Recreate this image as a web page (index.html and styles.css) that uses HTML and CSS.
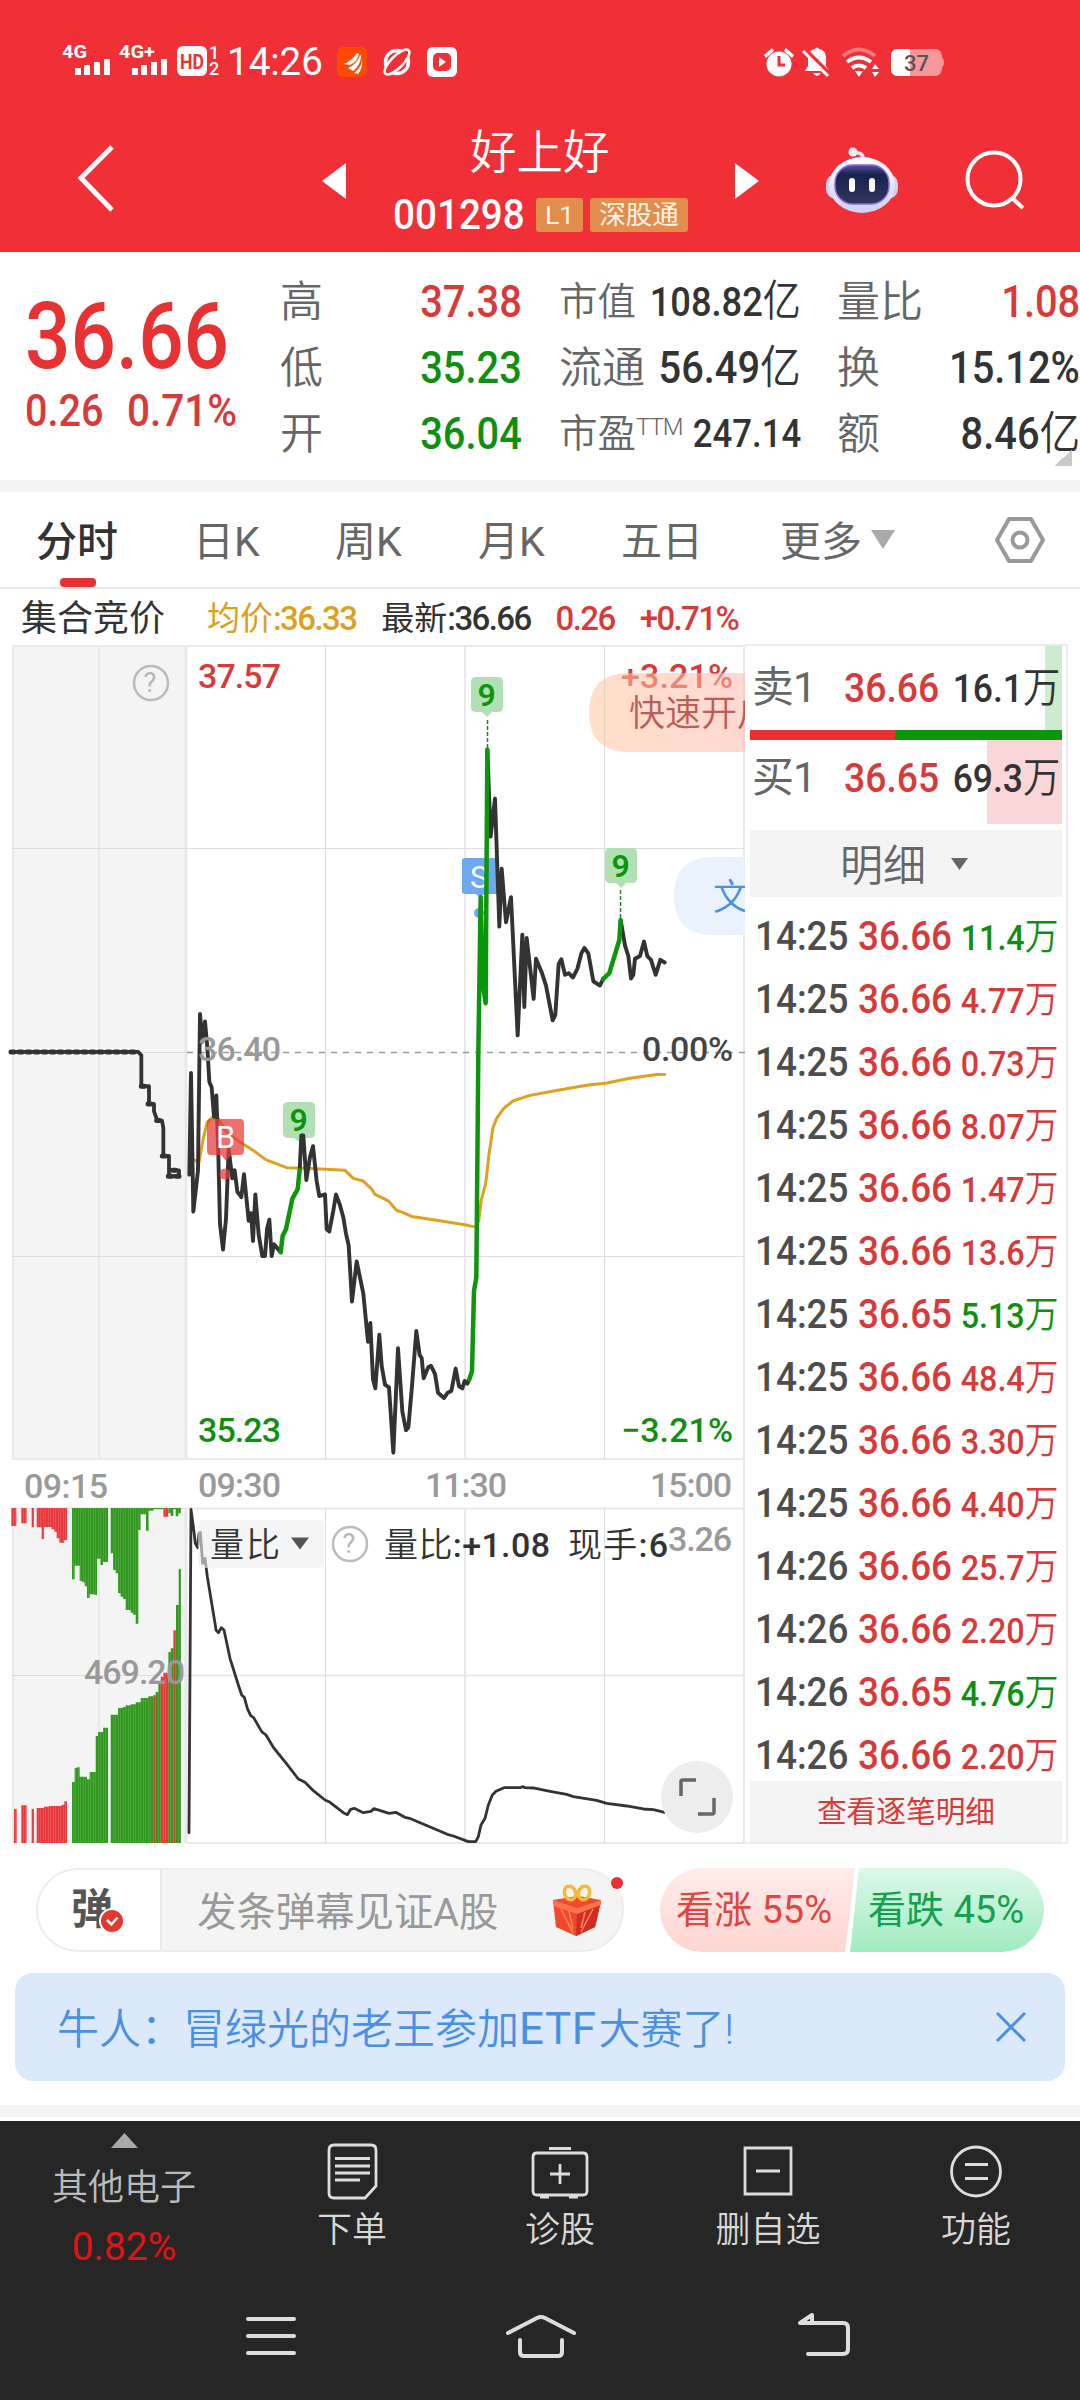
FILE: index.html
```html
<!DOCTYPE html>
<html lang="zh-CN">
<head>
<meta charset="utf-8">
<title>好上好 001298</title>
<link rel="stylesheet" href="styles.css">
</head>
<body>
<div class="app">
<header class="top">
  <div class="status">
    <svg class="status-left" width="167" height="40" viewBox="60 42 167 40" fill="#fff">
      <text x="62" y="58" class="net" textLength="25" lengthAdjust="spacingAndGlyphs">4G</text>
      <path d="M75 68h6v7h-6zM84 65h6v10h-6zM94 62h6v13h-6zM104 59h6v16h-6z"/>
      <text x="119" y="58" class="net" textLength="36" lengthAdjust="spacingAndGlyphs">4G+</text>
      <path d="M132 68h6v7h-6zM141 65h6v10h-6zM151 62h6v13h-6zM161 59h6v16h-6z"/>
      <rect x="177" y="46" width="30" height="30" rx="6"/>
      <text x="180" y="69" class="hd" textLength="24" lengthAdjust="spacingAndGlyphs">HD</text>
      <text x="209" y="59" class="sim">1</text><text x="209" y="75" class="sim">2</text>
    </svg>
    <span class="clock">14:26</span>
    <svg class="status-apps" width="122" height="32" viewBox="336 45 122 32">
      <rect x="337" y="46" width="30" height="30" rx="6" fill="#ff4a00"/>
      <path d="M343 63q8-2 14-11l2 1q-2 8-9 11zM348 67q9-4 12-13l1 1q0 9-8 15zM354 72q7-5 8-13 1 8-4 14z" fill="#fff"/>
      <g fill="none" stroke="#fff"><circle cx="397" cy="61" r="11.500" stroke-width="3.500"/><ellipse cx="397" cy="61" rx="16.500" ry="6" transform="rotate(-45 397 61)" fill="#f12f37" stroke-width="2.500"/></g>
      <rect x="427" y="46" width="30" height="30" rx="6" fill="#fff"/><rect x="433" y="52" width="18" height="18" rx="5" fill="#f12f37"/><path d="M439 56l7 5-7 5z" fill="#fff"/>
    </svg>
    <svg class="status-right" width="184" height="34" viewBox="764 44 184 34">
      <g fill="#fff"><circle cx="779" cy="63" r="12.500"/><path d="M764 54l8-7 2 3-8 7zM794 54l-8-7-2 3 8 7z"/></g>
      <path d="M779 55v9h6" fill="none" stroke="#f12f37" stroke-width="3"/>
      <path d="M805 70l3-5v-8q0-8 7-9 2-3 4 0 7 1 7 9v8l3 5zM813 72h8q-4 6-8 0z" fill="#fff"/>
      <path d="M805 49l25 25" stroke="#f12f37" stroke-width="5"/><path d="M803 50l25 25" stroke="#fff" stroke-width="3"/>
      <g fill="none" stroke="#fff" stroke-width="4"><path d="M843 55q16-13 32 0" opacity=".35"/><path d="M847 61q12-9 24 0M852 67q7-5 14 0"/></g><path d="M855 70h8l-4 6zM872 68l3-5 4 5zM872 71l3 5 4-5z" fill="#fff"/>
      <path d="M942 56q4 5 0 11z" fill="#f8979b"/><rect x="891" y="48" width="51" height="27" rx="7" fill="#f8979b"/><path d="M910 48h-12q-7 0-7 7v13q0 7 7 7h12z" fill="#fff"/>
      <text x="904" y="70" class="batt">37</text>
    </svg>
  </div>
  <div class="titlebar">
    <svg class="ic-back" width="40" height="70" viewBox="0 0 40 70"><path d="M36 3L5 34l31 32" fill="none" stroke="#fff" stroke-width="5"/></svg>
    <svg class="ic-prev" width="24" height="36" viewBox="0 0 24 36"><path d="M24 0v36L0 18z" fill="#fff"/></svg>
    <div class="title">
      <div class="name">好上好</div>
      <div class="code"><b>001298</b><i>L1</i><i>深股通</i></div>
    </div>
    <svg class="ic-next" width="24" height="36" viewBox="0 0 24 36"><path d="M0 0v36l24-18z" fill="#fff"/></svg>
    <svg class="ic-bot" width="74" height="68" viewBox="824 143 74 68">
      <defs><linearGradient id="shell" x2="0" y2="1"><stop stop-color="#fff"/><stop offset="1" stop-color="#cdd2f4"/></linearGradient><linearGradient id="face" x2="0" y2="1"><stop stop-color="#5b4e9f"/><stop offset=".25" stop-color="#16234d"/><stop offset="1" stop-color="#33375c"/></linearGradient></defs>
      <path d="M862 156q0-7-8-6" fill="none" stroke="#dfe1fa" stroke-width="4"/><circle cx="852" cy="149" r="4.500" fill="#eee"/>
      <rect x="825" y="171" width="72" height="25" rx="10" fill="#ccd1f2"/><ellipse cx="861" cy="182" rx="33" ry="28" fill="url(#shell)"/>
      <rect x="834" y="162" width="54" height="39" rx="18" fill="url(#face)" stroke="#8d6ae0" stroke-width="1.500"/><rect x="848" y="175" width="6" height="14" rx="3" fill="#fff"/><rect x="868" y="175" width="6" height="14" rx="3" fill="#fff"/>
    </svg>
    <svg class="ic-search" width="62" height="62" viewBox="0 0 62 62"><g fill="none" stroke="#fff" stroke-width="4"><circle cx="30" cy="30" r="26.500"/><path d="M47 48l12 11"/></g></svg>
  </div>
</header>

<section class="quote">
  <div class="price">
    <div class="last">36.66</div>
    <div class="chg"><span>0.26</span><span>0.71%</span></div>
  </div>
  <dl class="col c1">
    <div><dt>高</dt><dd class="up">37.38</dd></div>
    <div><dt>低</dt><dd class="down">35.23</dd></div>
    <div><dt>开</dt><dd class="down">36.04</dd></div>
  </dl>
  <dl class="col c2">
    <div><dt class="sm">市值</dt><dd class="sm">108.82<em>亿</em></dd></div>
    <div><dt>流通</dt><dd>56.49<em>亿</em></dd></div>
    <div><dt class="sm">市盈<sup>TTM</sup></dt><dd class="sm pe">247.14</dd></div>
  </dl>
  <dl class="col c3">
    <div><dt>量比</dt><dd class="up">1.08</dd></div>
    <div><dt>换</dt><dd>15.12%</dd></div>
    <div><dt>额</dt><dd>8.46<em>亿</em></dd></div>
  </dl>
  <span class="corner"></span>
</section>

<nav class="tabs">
  <span class="tab on">分时</span><span class="tab">日K</span><span class="tab">周K</span><span class="tab">月K</span><span class="tab">五日</span>
  <span class="tab more">更多<svg width="24" height="19" viewBox="0 0 24 19"><path d="M0 0h24L12 19z" fill="#aaa"/></svg></span>
  <svg class="gear" width="50" height="48" viewBox="0 0 50 48"><g fill="none" stroke="#999" stroke-width="4"><path d="M14 3h22l12 21-12 21H14L2 24z" stroke-linejoin="round"/><circle cx="25" cy="24" r="7.500"/></g></svg>
</nav>
<div class="info"><span class="cj">集合竞价</span><span class="avg">均价<b>:36.33</b></span><span>最新<b>:36.66</b></span><span class="up"><b>0.26</b></span><span class="up"><b>+0.71%</b></span></div>

<main class="main">
<svg class="chart" width="745" height="1203" viewBox="0 642 745 1203">
  <defs>
    <pattern id="r" width="7.500" height="20" x="1" patternUnits="userSpaceOnUse"><rect width="8" height="20" fill="#e8343a"/><rect width="1.500" height="20" fill="#f27a7c"/></pattern>
    <pattern id="g" width="7.500" height="20" x="1" patternUnits="userSpaceOnUse"><rect width="8" height="20" fill="#2f981d"/><rect width="1.500" height="20" fill="#72ba60"/></pattern>
    <linearGradient id="op"><stop stop-color="#ffc79f"/><stop offset="1" stop-color="#ffb9ad"/></linearGradient>
  </defs>
  <path d="M12 645h173v814H12zM12 1508h173v335H12z" fill="#f4f4f4"/>
  <g stroke="#e9e9e9" stroke-width="2" fill="none">
    <path d="M12 646H745M12 1459H745M12 1508.500H745M187 1675.500H745M187 1843H745M13 645V1459M99 645V1459M13 1508V1843M99 1508V1843M465 645V1459M465 1508V1843M744 645V1843"/>
    <path d="M186 645V1459M186 1508V1843" stroke-width="3"/>
    <path d="M12 848.500H745M12 1052.500H187M12 1256.500H745M12 1675.500H187M325.500 645V1459M325.500 1508V1843M604.500 645V1459M604.500 1508V1843" stroke="#ddd" stroke-width="1"/>
  </g>
  <path d="M187 1052.500H745" stroke="#999" stroke-width="1.500" stroke-dasharray="6 6"/>
  <g class="lab">
    <text x="198" y="688" textLength="83" class="up">37.57</text><text x="621" y="688" textLength="112" class="up">+3.21%</text>
    <text x="198" y="1442" textLength="83" class="down">35.23</text><text x="621" y="1442" textLength="112" class="down">−3.21%</text>
    <text x="642" y="1061" textLength="91" fill="#444">0.00%</text>
  </g>
  <g class="lab grey">
    <text x="24" y="1498" textLength="84">09:15</text><text x="198" y="1497" textLength="83">09:30</text>
    <text x="425" y="1497" textLength="82">11:30</text><text x="650" y="1497" textLength="82">15:00</text>
    <text x="668" y="1551" textLength="64">3.26</text>
  </g>
  <g class="mark" fill="#a9ddac" fill-opacity=".9">
    <path d="M288 1102h22q5 0 5 5v26q0 5-5 5h-6l-5 4-5-4h-6q-5 0-5-5v-26q0-5 5-5z"/><path d="M476 677h22q5 0 5 5v25q0 5-5 5h-6l-5 5-5-5h-6q-5 0-5-5v-25q0-5 5-5z"/><path d="M610 848h22q5 0 5 5v25q0 5-5 5h-6l-5 5-5-5h-6q-5 0-5-5v-25q0-5 5-5z"/>
  </g>
  <path d="M487.500 720v30M620.500 890v30" stroke="#2c7d2c" stroke-width="1.500" stroke-dasharray="4 2"/>
  <g fill="#6ea8f0"><path d="M465 858h31q3 0 3 3v30q0 3-3 3h-12l-4 4-4-4h-11q-3 0-3-3v-30q0-3 3-3z"/><circle cx="479" cy="913" r="5"/></g>
  <text x="470" y="888" class="bs">S</text>
  <!-- price and average lines; x is tripled so sub-pixel steps stay short to write -->
  <g transform="translate(0 640) scale(.33333 .53571)" class="ln">
    <path d="M580 970L597 975 610 930 622 900 635 892 655 893 680 920 732 942 765 955 797 970 860 985 920 986 1035 990 1060 1005 1090 1010 1115 1025 1125 1035 1165 1047 1190 1065 1210 1069 1235 1076 1310 1083 1390 1091 1428 1096 1436 1085 1444 1045 1457 1015 1467 960 1479 910 1490 893 1510 875 1540 860 1590 850 1670 841 1760 831 1820 827 1890 818 1970 811 1994 811" stroke="#e0a020" stroke-width="3"/>
    <path d="M33 769H415L424 775V833H447V866H462V880L472 897H486L490 911V963H507V1001H537V990H515" stroke="#333" stroke-width="3.800"/>
    <path d="M33 769H415M424 833H447M444 866H462M470 897H486M487 963H507M505 1001H537M518 990H540" stroke="#333" stroke-width="5" stroke-dasharray="3 5"/>
    <g stroke="#333" stroke-width="3.900">
    <path d="M568 998L573 808 580 1067 594 990 600 698 607 750 615 712 622 760 628 825 635 835 642 890 649 850 655 960 660 1090 669 1138 678 1080 686 950 697 1005 704 990 712 1030 724 1040 732 997 746 1084 753 1070 759 1122 766 1035 776 1110 787 1150H795L801 1100 808 1082 815 1150 822 1128 842 1143"/>
    <path d="M899 990L904 925H910L919 1008 930 965 939 945 950 1010 958 1038 975 1035 980 1100 988 1104 1000 1065 1008 1035 1020 1055 1030 1078 1038 1108 1046 1130 1056 1235 1070 1160 1090 1220 1104 1310 1111 1275 1119 1380 1126 1397 1138 1297 1145 1355 1155 1390 1167 1395 1180 1517 1194 1322 1207 1440 1218 1475 1225 1470 1235 1400 1249 1290 1259 1335 1265 1340 1271 1378 1285 1357 1293 1355 1305 1370 1314 1405 1332 1415 1343 1405 1354 1402 1367 1360 1377 1393 1387 1397 1394 1383 1402 1388 1408 1380"/>
    <path d="M1462 205L1472 367 1485 296 1498 535 1505 427 1518 527 1533 480 1553 738 1567 550 1573 685 1580 556 1601 670 1608 595 1625 620 1638 645 1658 710 1666 700 1676 605 1684 596 1695 625 1706 622 1719 630 1732 614 1744 585 1753 575 1765 585 1780 637 1800 645 1809 633M1862 523L1875 570 1885 590 1893 632 1900 625 1905 595 1920 590 1932 563 1942 590 1953 597 1967 625 1981 597 1994 602"/></g>
    <g stroke="#0c960c" stroke-width="4.500"><path d="M842 1143L848 1112 858 1100 877 1043 893 1025 899 990"/><path d="M1408 1380L1416 1365 1422 1215 1429 1190 1435 770 1442 480 1448 640 1457 678 1462 205M1445 560L1456 675"/><path d="M1809 633L1828 622 1858 560 1862 523"/></g>
  </g>
  <text x="198" y="1061" class="labt" textLength="83">36.40</text>
  <g class="nine"><text x="289.500" y="1131">9</text><text x="477.500" y="706">9</text><text x="611.500" y="877">9</text></g>
  <g fill="#ea3d3d" fill-opacity=".75"><path d="M211 1119h29q4 0 4 4v28q0 4-4 4h-9l-5 6-5-6h-10q-4 0-4-4v-28q0-4 4-4z"/><circle cx="225" cy="1174" r="5.500"/></g>
  <text x="216" y="1148" class="bs">B</text>
  <!-- pre-open auction volume -->
  <g transform="translate(0 1450) scale(.33333)">
    <path fill="url(#r)" d="M34 174H49V228H34zM64 174H80V220H64zM95 174H102V232H95zM110 174H201V270H193V278H178V265H170V245H163V238H155V231H132V267H125V232H110zM490 174H505V200H490zM42 1179V1077H50V1179zM64 1179V1066H80V1179zM95 1179V1077H102V1179zM110 1179V1074H132V1070H147V1068H185V1064H193V1054H201V1179z"/>
    <path fill="url(#g)" d="M216 174H324V336H309V345H301V326H291V435H284V433H269V444H261V409H254V397H247V393H239V347H224V388H216zM332 174H490V178H460V182H446V242H438V193H422V240H415V521H407V494H399V488H392V480H377V447H369V440H362V430H354V370H347V360H339V310H332zM505 174H543V190H535V199H527V178H520V198H512V190H505z"/>
    <path fill="url(#g)" d="M216 1179V996H224V954H230V952H239V980H261V988H269V966H287V858H294V846H309V833H324V1179zM332 1179V794H354V774H369V771H377V766H392V763H407V757H422V744H445V739H467V726H475V700H505V606H512V595H528V465H536V357H543V1179z"/>
    <path fill="url(#r)" d="M460 1179V735H467V1179zM482 1179V680H490V668H505V1179zM520 1179V541H528V1179z"/>
    <g class="ln"><path stroke="#333" stroke-width="2.800" d="M567 1148L573 178 580 230 586 280 593 293 597 250 601 247 608 340 615 325 622 380 645 520 648 540 655 548 664 533 672 540 690 625 715 705 725 735 733 742 742 775 752 797 761 803 785 845 798 855 820 892 860 942 895 987 915 997 940 1022 975 1050 990 1057 1030 1088 1042 1094 1052 1078 1063 1075 1090 1088 1113 1084 1122 1076 1167 1090 1187 1087 1215 1102 1232 1106 1342 1153 1360 1158 1405 1175H1427L1435 1160 1443 1125 1455 1105 1465 1065 1477 1035 1488 1024 1512 1013H1560L1567 1010 1575 1013 1600 1014 1650 1024 1700 1033 1720 1040 1790 1051 1820 1060 1880 1068 1930 1077 1960 1079 1994 1087"/></g>
  </g>
  <text x="84" y="1684" class="labt" textLength="101">469.20</text>
  <g class="help"><circle cx="151" cy="683" r="17"/><circle cx="350" cy="1544" r="17"/></g>
  <text x="143.500" y="692" class="q">?</text><text x="342.500" y="1553" class="q">?</text>
  <rect x="198" y="1520" width="126" height="48" rx="5" fill="#efefef" fill-opacity=".6"/>
  <text x="210" y="1557" class="cn" textLength="70">量比</text><path d="M291 1537.500h18l-9 12z" fill="#555"/>
  <text x="384" y="1557" class="cn" textLength="166">量比<tspan>:+1.08</tspan></text><text x="568" y="1557" class="cn" textLength="100">现手<tspan>:6</tspan></text>
  <path d="M746 673H629q-40 0-40 39.500T629 752H746z" fill="url(#op)" opacity=".55"/><text x="629" y="726" class="pill" fill="#b95d59">快速开户</text>
  <path d="M746 857H713q-39 0-39 39t39 39H746z" fill="#eaf2fd"/><text x="713" y="910" class="pill" fill="#4a90e2">文</text>
  <circle cx="697" cy="1797" r="36" fill="#ededed"/><path d="M681 1796V1781.500Q681 1780 682.500 1780H696M714 1798V1812Q714 1814 712 1814H698" fill="none" stroke="#666" stroke-width="3.500"/>
</svg>
<aside class="book">
  <div class="lv ask"><span class="k">卖1</span><span class="p">36.66</span><span class="v">16.1<em>万</em></span></div>
  <div class="ratio"><i></i></div>
  <div class="lv bid"><span class="k">买1</span><span class="p">36.65</span><span class="v">69.3<em>万</em></span></div>
  <div class="detail">明细<svg width="17" height="12" viewBox="0 0 17 12"><path d="M0 0h17l-8.500 12z" fill="#666"/></svg></div>
  <div class="ticks">
    <div><b>14:25</b><b>36.66</b><b class="down">11.4<em>万</em></b></div>
    <div><b>14:25</b><b>36.66</b><b>4.77<em>万</em></b></div>
    <div><b>14:25</b><b>36.66</b><b>0.73<em>万</em></b></div>
    <div><b>14:25</b><b>36.66</b><b>8.07<em>万</em></b></div>
    <div><b>14:25</b><b>36.66</b><b>1.47<em>万</em></b></div>
    <div><b>14:25</b><b>36.66</b><b>13.6<em>万</em></b></div>
    <div><b>14:25</b><b>36.65</b><b class="down">5.13<em>万</em></b></div>
    <div><b>14:25</b><b>36.66</b><b>48.4<em>万</em></b></div>
    <div><b>14:25</b><b>36.66</b><b>3.30<em>万</em></b></div>
    <div><b>14:25</b><b>36.66</b><b>4.40<em>万</em></b></div>
    <div><b>14:26</b><b>36.66</b><b>25.7<em>万</em></b></div>
    <div><b>14:26</b><b>36.66</b><b>2.20<em>万</em></b></div>
    <div><b>14:26</b><b>36.65</b><b class="down">4.76<em>万</em></b></div>
    <div><b>14:26</b><b>36.66</b><b>2.20<em>万</em></b></div>
  </div>
  <div class="all">查看逐笔明细</div>
</aside>
</main>

<section class="social">
  <div class="danmu">
    <div class="tan">弹<svg class="chk" width="26" height="26" viewBox="0 0 26 26"><circle cx="13" cy="13" r="12" fill="#e2382f" stroke="#fff" stroke-width="2"/><path d="M8 12l4.500 4.500 6-7" fill="none" stroke="#fff" stroke-width="2.500"/></svg></div>
    <div class="say">发条弹幕见证A股</div>
    <svg class="gift" width="52" height="54" viewBox="550 1891 52 54">
      <path d="M552 1908l25-4 23 4-2 10-4 17-19 9-20-9z" fill="#f0492c"/><path d="M576 1916l24-8-2 10-4 17-19 9z" fill="#d42b20"/><path d="M552 1908l24 8 24-8v5l-24 9-23-8z" fill="#ff7450"/><path d="M560 1917l12 24M568 1919l4 18M592 1917l-12 23M584 1920l-4 16" stroke="#ff8a5c" stroke-width="1.500"/>
      <g fill="none" stroke="#f6b93a" stroke-width="3.500"><ellipse cx="569" cy="1901" rx="5.500" ry="7" transform="rotate(-20 569 1901)"/><ellipse cx="583" cy="1901" rx="5.500" ry="7" transform="rotate(20 583 1901)"/></g>
    </svg>
    <i class="dot"></i>
  </div>
  <div class="vote"><div class="bull">看涨 55%</div><div class="bear">看跌 45%</div></div>
</section>
<div class="banner"><span>牛人：冒绿光的老王参加<b>ETF</b>大赛了!</span><svg width="30" height="30" viewBox="0 0 30 30"><path d="M1 1l28 28M29 1L1 29" stroke="#4a90e2" stroke-width="3"/></svg></div>
<div class="band"></div>

<footer class="foot">
  <div class="actions">
    <div class="sector"><svg width="27" height="15" viewBox="0 0 27 15"><path d="M0 15L13.500 0 27 15z" fill="#aaa"/></svg><span>其他电子</span><b>0.82%</b></div>
    <div class="act"><svg width="60" height="60" viewBox="322 2142 60 60"><path d="M334 2145h37q5 0 5 5v36l-11 12h-31q-5 0-5-5v-43q0-5 5-5zM335 2158.500h35M335 2166h35M335 2173h35M335 2180h25"/></svg>下单</div>
    <div class="act"><svg width="60" height="60" viewBox="530 2142 60 60"><path d="M537 2153h46q4 0 4 4v34q0 4-4 4h-46q-4 0-4-4v-34q0-4 4-4zM560 2164v20M550 2174h20M549 2148.500h22M540 2197h9M569 2197h9"/></svg>诊股</div>
    <div class="act"><svg width="60" height="60" viewBox="737 2142 60 60"><path d="M744 2148h46v46h-46zM755 2171h24"/></svg>删自选</div>
    <div class="act"><svg width="60" height="60" viewBox="945 2142 60 60"><circle cx="975" cy="2171.500" r="24.500"/><path d="M964 2164.500h23M964 2178.500h23"/></svg>功能</div>
  </div>
  <div class="sys">
    <svg width="52" height="42" viewBox="245 2316 52 42"><path d="M248 2320h46M248 2337h46M248 2354h46"/></svg>
    <svg class="home" width="74" height="46" viewBox="504 2313 74 46"><path d="M508 2333l29-15q4-2 8 0l29 15M520 2340v12q0 4 4 4h34q4 0 4-4v-12"/></svg>
    <svg width="56" height="46" viewBox="796 2313 56 46"><path d="M800 2323h43q5 0 5 5v21q0 5-5 5h-35M800 2323l12-8v8z"/></svg>
  </div>
</footer>
</div>
</body>
</html>
```
FILE: styles.css
```css
* { box-sizing: border-box; margin: 0; padding: 0; }
body { width: 1080px; height: 2400px; overflow: hidden; background: #fff; color: #333; font-family: Roboto, "Noto Sans CJK SC", sans-serif; }
em, i { font-style: normal; }
b { font-weight: 500; }
svg { display: block; flex: none; }
.app { width: 1080px; height: 2400px; display: flex; flex-direction: column; }
.up { color: #d83a3a; fill: #d83a3a; }
.down { color: #0f8f0f; fill: #0f8f0f; }

.top { height: 252px; background: #f12f37; color: #fff; }
.status { height: 124px; display: flex; align-items: center; padding-left: 60px; }
.status svg { overflow: visible; }
.clock { font-size: 38.500px; width: 109px; line-height: 40px; }
.status-right { margin-left: 306px; }
.net { font: 700 19px Roboto; }
.hd { font: 700 21px Roboto; fill: #f12f37; }
.sim { font: 500 18px Roboto; }
.batt { font: 500 22px Roboto; fill: #555; }
.titlebar { height: 128px; display: flex; align-items: center; padding: 0 54px 0 76px; }
.ic-back { margin-top: -18px; }
.ic-prev { margin: -15px 0 0 206px; }
.ic-next { margin-top: -15px; }
.title { width: 389px; display: flex; flex-direction: column; align-items: flex-start; padding-left: 47px; margin-top: -16px; }
.name { font-size: 46.500px; line-height: 58px; font-weight: 350; padding-left: 77px; margin-top: -3px; }
.code { display: flex; align-items: center; gap: 7px; height: 38px; margin-top: 14px; }
.code b { font-size: 42px; width: 136px; transform: scaleX(.92); transform-origin: left; }
.code i { height: 34px; line-height: 34px; padding: 0 9px; font-size: 26.500px; background: #e38d4c; border-radius: 3px; color: #fff4e8; }
.ic-bot { margin: -17px 0 0 66px; }
.ic-search { margin: -16px 0 0 auto; }

.quote { position: relative; height: 240px; display: flex; border-bottom: 12px solid #f4f4f4; padding-top: 17px; }
.price { width: 280px; padding-left: 25px; color: #e63232; }
.last { font-size: 93px; font-weight: 500; line-height: 104px; margin-top: 16px; transform: scaleX(.86); transform-origin: left; }
.chg { display: flex; font-size: 44px; line-height: 50px; margin-top: -3px; color: #d83a3a; font-weight: 500; }
.chg span { width: 102px; transform: scaleX(.9); transform-origin: left; }
.chg span + span { transform: scaleX(.92); }
.col > div { display: flex; justify-content: space-between; align-items: center; height: 66px; line-height: 66px; white-space: nowrap; }
.c1 { width: 242px; }
.c2 { width: 242px; margin-left: 37px; }
.c3 { width: 243px; margin-left: 36px; }
dt { font-size: 43px; color: #666; font-weight: 350; }
dt.sm { font-size: 38.500px; }
dt sup { font-size: 24px; line-height: 0; vertical-align: 12px; letter-spacing: -1px; }
dd { font-size: 45px; font-weight: 500; transform: scaleX(.885); transform-origin: right; margin-left: -20px; }
dd em { font-weight: 350; font-size: 46px; line-height: 0; }
dd.sm { font-size: 41px; }
dd.sm em { font-size: 43px; }
dd.pe { font-size: 39.500px; transform: scaleX(.88); }
.corner { position: absolute; right: 8px; bottom: 14px; width: 18px; height: 16px; background: linear-gradient(138deg, transparent 50%, #c8c8c8 50%); }

.tabs { height: 97px; display: flex; align-items: center; padding-left: 36px; border-bottom: 2px solid #e8e8e8; font-size: 41px; color: #666; font-weight: 400; }
.tab { width: 143px; line-height: 91px; padding-top: 6px; white-space: nowrap; }
.tab.on { width: 157px; color: #333; font-weight: 500; position: relative; }
.tab.on::after { content: ""; position: absolute; left: 24px; bottom: 1px; width: 36px; height: 9px; border-radius: 4px; background: #e63232; }
.tab:nth-child(2) { width: 142px; }
.tab.more { display: flex; align-items: center; gap: 9px; margin-left: 16px; width: 215px; }
.more svg { margin-top: -6px; }
.info { height: 53px; display: flex; align-items: center; padding: 7px 0 0 21px; gap: 25px; font-size: 33px; line-height: 46px; }
.info b { letter-spacing: -1.600px; }
.info .cj { font-size: 36px; margin-right: 17px; }
.info .avg { color: #dca020; }

.main { height: 1203px; display: flex; }
.lab text, .labt { font: 500 34px Roboto; }
.lab.grey, .labt { fill: #999; }
.ln path { fill: none; stroke-linejoin: round; stroke-linecap: round; vector-effect: non-scaling-stroke; }
.bs { font: 400 31px Roboto; fill: #fff; }
.nine { font: 600 32px Roboto; fill: #0b950b; }
.help { fill: none; stroke: #bbb; stroke-width: 2.500; }
.q { font: 400 27px Roboto; fill: #b5b5b5; }
.cn { font: 350 34px Roboto, "Noto Sans CJK SC"; fill: #333; }
.cn tspan { font-weight: 500; }
.pill { font: 350 36px "Noto Sans CJK SC"; }
.book { width: 323px; border: 2px solid #ebebeb; border-left: 0; padding: 0 4px 0 5px; margin-top: 2px; height: 1200px; }
.lv { display: flex; align-items: center; height: 84px; padding: 0 2px 0 2px; white-space: nowrap; line-height: 86px; }
.lv .k { width: 88px; font-size: 42px; color: #666; font-weight: 400; letter-spacing: -1px; }
.lv .p { font-size: 41px; font-weight: 500; color: #d83a3a; transform: scaleX(.91); transform-origin: left; margin: 0 -10px 0 4px; }
.lv .v { margin-left: auto; font-size: 39px; font-weight: 500; transform: scaleX(.91); transform-origin: right; }
.lv em { font-weight: 350; font-size: 41px; }
.ask { background: linear-gradient(#cdebcd, #cdebcd) right / 17px 100% no-repeat; }
.bid { background: linear-gradient(#f9d6d7, #f9d6d7) right / 75px 100% no-repeat; padding-bottom: 8px; }
.ratio { height: 10px; background: #0c960c; }
.ratio i { display: block; width: 145px; height: 10px; background: #e63232; }
.detail { margin-top: 6px; height: 67px; background: #f4f4f4; color: #666; font-size: 43px; font-weight: 350; line-height: 67px; display: flex; align-items: center; gap: 25px; padding: 6px 0 0 90px; }
.detail svg { margin-top: -6px; }
.ticks { height: 884px; padding-top: 8px; }
.ticks div { height: 63px; line-height: 63px; display: flex; align-items: baseline; padding: 0 4px 0 5px; color: #d83a3a; font-size: 40.500px; white-space: nowrap; }
.ticks b { flex: none; transform: scaleX(.91); transform-origin: left; width: 103px; }
.ticks b + b { margin-right: -24px; }
.ticks b:first-child { color: #4d4d4d; }
.ticks b:last-child { margin: 0 0 0 auto; width: auto; font-size: 35.500px; line-height: 50px; transform-origin: right; }
.ticks em { font-weight: 350; font-size: 37px; line-height: 0; }
.all { height: 61px; line-height: 62px; background: #f4f4f4; text-align: center; color: #d83a3a; font-size: 29.700px; }

.social { display: flex; align-items: center; justify-content: space-between; height: 84px; margin: 23px 36px 0; flex: none; }
.danmu { position: relative; width: 588px; height: 84px; border: 2px solid #ededed; border-radius: 42px; background: linear-gradient(90deg, #fff 122px, #e9e9e9 122px 124px, #f4f4f4 124px); display: flex; align-items: center; }
.tan { position: relative; width: 124px; padding-left: 33px; font-size: 42px; font-weight: 700; color: #555; margin-top: -10px; }
.chk { position: absolute; left: 61px; bottom: 2px; }
.say { margin-left: 35px; width: 354px; font-size: 39.400px; color: #999; font-weight: 400; white-space: nowrap; margin-top: -3px; }
.dot { position: absolute; right: -1px; top: 7px; width: 12px; height: 12px; border-radius: 50%; background: #e63232; }
.vote { width: 384px; height: 84px; display: grid; grid-template-columns: 195px 189px; border-radius: 42px; overflow: hidden; font-size: 38px; line-height: 85px; white-space: nowrap; }
.bull { padding-left: 16px; color: #e0453f; background: linear-gradient(#feeceb, #fed5d0); clip-path: polygon(0 0, 100% 0, 185px 100%, 0 100%); }
.bear { padding-left: 18px; margin-left: -5px; color: #12a150; background: linear-gradient(#dcf9e8, #a0ebbf); clip-path: polygon(9px 0, 100% 0, 100% 100%, 0 100%); }
.banner { flex: none; margin: 21px 15px 0; height: 108px; border-radius: 18px; background: #dbe9fb; display: flex; align-items: center; justify-content: space-between; padding: 0 39px 0 42px; font-size: 42px; color: #4a90e2; font-weight: 350; white-space: nowrap; }
.banner span { margin-top: -3px; }
.banner b { font-weight: 400; font-size: 44px; line-height: 0; letter-spacing: .500px; margin-right: 2px; }
.band { flex: none; margin-top: 24px; height: 12px; background: #f4f4f4; }

.foot { margin-top: 4px; height: 279px; background: #262626; color: #d8d8d8; }
.actions { height: 156px; display: flex; }
.sector { width: 248px; display: flex; flex-direction: column; align-items: center; padding-top: 12px; font-size: 36px; color: #bbb; }
.sector span { line-height: 52px; margin-top: 14px; font-weight: 350; }
.sector b { color: #e01414; font-size: 39px; font-weight: 400; line-height: 48px; margin-top: 9px; }
.act { width: 208px; display: flex; flex-direction: column; align-items: center; padding-top: 21px; font-size: 35px; line-height: 58px; font-weight: 350; }
.act svg { fill: none; stroke: #ddd; stroke-width: 2.800; }
.sys { display: flex; align-items: center; padding: 36px 228px 0 245px; justify-content: space-between; }
.sys svg { fill: none; stroke: #ddd; stroke-width: 4; stroke-linecap: round; stroke-linejoin: round; }
.sys .home { margin-left: -12px; }
```
